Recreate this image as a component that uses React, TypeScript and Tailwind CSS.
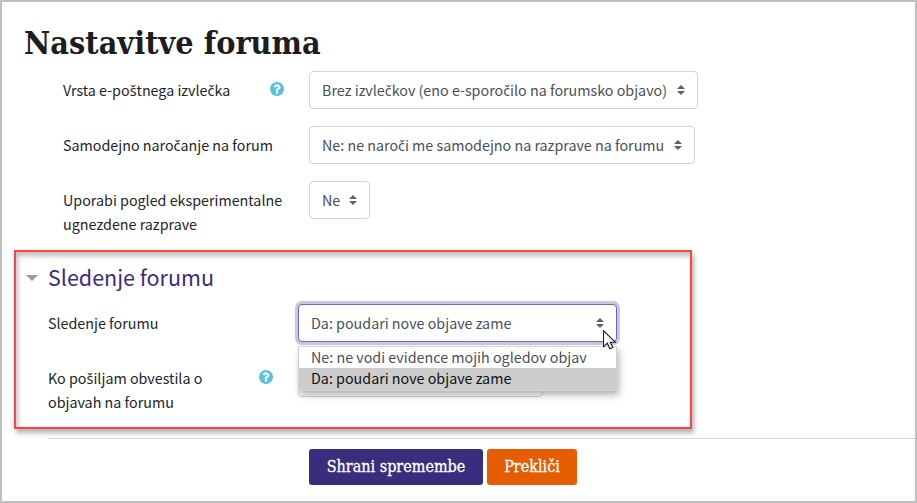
import type { ReactNode } from "react";

function Label({ text }: { text: string }) {
  return (
    <>
      {text.split(/([čš])/).map((part, i) =>
        part === "č" || part === "š" ? (
          <span key={i} className="font-['Noto_Sans',sans-serif] leading-none">{part}</span>
        ) : (
          part
        ),
      )}
    </>
  );
}

function Carets() {
  return (
    <svg width="8" height="10" viewBox="0 0 8 10" fill="#5f6063" className="shrink-0">
      <path d="M4 0 8 4H0zM4 10 0 6h8z" />
    </svg>
  );
}

function Help() {
  return (
    <svg width="14" height="14" viewBox="0 0 1536 1536" className="mt-[5px] shrink-0" fill="#5bc0de">
      <path d="M896 1248v-192q0-14-9-23t-23-9H672q-14 0-23 9t-9 23v192q0 14 9 23t23 9h192q14 0 23-9t9-23zm256-672q0-88-55.500-163T958 297t-170-41q-243 0-371 213-15 24 8 42l132 100q7 6 19 6 16 0 25-12 53-68 86-92 34-24 86-24 48 0 85.500 26t37.500 59q0 38-20 61t-68 45q-63 28-115.500 86.500T640 892v36q0 14 9 23t23 9h192q14 0 23-9t9-23q0-19 21.500-49.500T972 829q32-18 49-28.500t46-35 44.500-48 28-60.500 12.500-81zm384 192q0 209-103 385.500T1153.500 1433 768 1536t-385.500-103T103 1153.500 0 768t103-385.500T382.500 103 768 0t385.500 103T1433 382.500 1536 768z" />
    </svg>
  );
}

function Select({ children, className }: { children?: ReactNode; className: string }) {
  return (
    <div className={`flex h-[38px] items-center justify-between rounded-[4px] border border-[#ced4da] bg-white pl-3 pr-3 text-[#495057] ${className}`}>
      <span className="whitespace-nowrap">{children}</span>
      <Carets />
    </div>
  );
}

export default function App() {
  return (
    <main className="relative h-[503px] w-[917px] overflow-hidden border-2 border-[#bfbfbf] bg-white font-['Noto_Sans_CJK_SC',sans-serif] text-[14.3px] leading-6 text-[#212529]">
      <h1 className="ml-[22px] h-[69px] whitespace-nowrap pt-[21px] font-['DejaVu_Serif_Condensed','DejaVu_Serif',serif] text-[32px] font-bold leading-[40px] tracking-[0.05px] text-[#1d1d1f]">Nastavitve foruma</h1>
      <div className="flex h-[55px] pl-[61px]">
        <div className="w-[207px] pt-[7px]"><Label text="Vrsta e-poštnega izvlečka" /></div>
        <div className="w-[39px] pt-[6px]"><Help /></div>
        <Select className="w-[389px]"><Label text="Brez izvlečkov (eno e-sporočilo na forumsko objavo)" /></Select>
      </div>
      <div className="flex h-[55px] pl-[61px]">
        <div className="w-[246px] pt-[7px]"><Label text="Samodejno naročanje na forum" /></div>
        <Select className="w-[386px]"><Label text="Ne: ne naroči me samodejno na razprave na forumu" /></Select>
      </div>
      <div className="flex h-[69px] pl-[61px]">
        <div className="w-[246px] pt-[7px]">Uporabi pogled eksperimentalne<br />ugnezdene razprave</div>
        <Select className="w-[61px]">Ne</Select>
      </div>
      <section className="ml-3 h-[179px] w-[678px] border-2 border-[#ff4343] shadow-[2px_4px_5px_rgba(0,0,0,0.3),inset_2px_4px_5px_rgba(0,0,0,0.25)]">
        <h2 className="flex h-[52px] items-center pl-[10px] text-[21.5px] text-[#3b2d7d]">
          <svg width="12" height="6" viewBox="0 0 12 6" className="mr-[10px]" fill="#999"><path d="M0 0h12L6 6z" /></svg>
          <span className="-mt-[3px]">Sledenje forumu</span>
        </h2>
        <div className="flex h-[55px] pl-8">
          <div className="w-[250px] pt-[7px]">Sledenje forumu</div>
          <div className="relative">
            <Select className="w-[319px] border-[#7661c4]! shadow-[0_0_0_3px_#cbc6df]">Da: poudari nove objave zame</Select>
            <div className="absolute left-0 top-[42px] z-10 h-[45px] w-[319px] border border-[#d2d2d2] bg-white shadow-[2px_4px_7px_rgba(0,0,0,0.3)]">
              <div className="h-[21px] pl-3 leading-[20px] text-[#495057]">Ne: ne vodi evidence mojih ogledov objav</div>
              <div className="h-[22px] bg-[#cdcdcd] pl-3 leading-[20px] text-[#101010]">Da: poudari nove objave zame</div>
            </div>
            <svg width="14" height="20" viewBox="0 0 14 20" className="absolute left-[305px] top-[26px] z-20">
              <path d="M.5.8v16l3.800-3.600 2.500 5.600 3-1.300-2.500-5.300h5z" fill="#fff" stroke="#171525" strokeWidth="1.1" />
            </svg>
          </div>
        </div>
        <div className="flex pl-8">
          <div className="w-[211px] pt-[7px]"><Label text="Ko pošiljam obvestila o" /><br />objavah na forumu</div>
          <div className="w-[39px] pt-[6px]"><Help /></div>
          <Select className="w-[245px]" />
        </div>
      </section>
      <div className="ml-[46px] mt-[9px] border-t border-[#d9d9d9]" />
      <div className="ml-[307px] mt-[10px] flex gap-1 font-['DejaVu_Serif_Condensed','DejaVu_Serif',serif] text-[16px] text-white [-webkit-text-stroke:0.3px_#fff]">
        <button className="h-9 w-[174px] whitespace-nowrap rounded-[3px] bg-[#3b2d7d]">Shrani spremembe</button>
        <button className="h-9 w-[90px] whitespace-nowrap rounded-[3px] bg-[#e65c00]">Prekliči</button>
      </div>
    </main>
  );
}
